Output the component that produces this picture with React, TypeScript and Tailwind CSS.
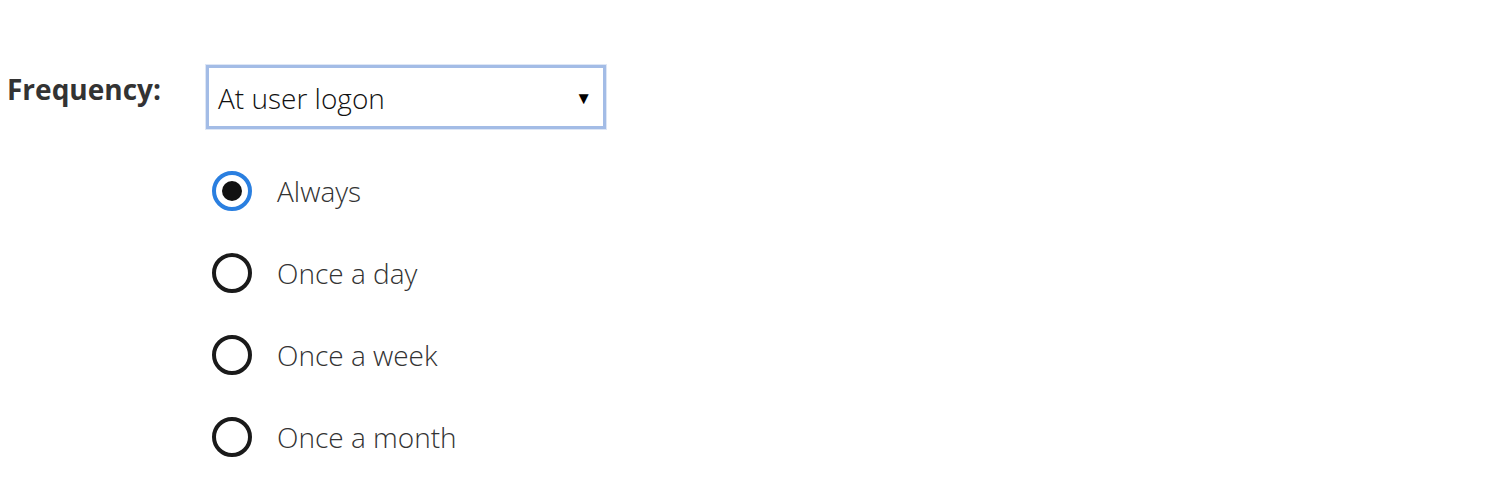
import { useState } from 'react';

const OPTIONS = ['Always', 'Once a day', 'Once a week', 'Once a month'];

function Radio({ checked }: { checked: boolean }) {
  if (checked) {
    return (
      <span className="w-[40px] h-[40px] rounded-full border-[4px] border-[#2a7fe0] bg-white flex items-center justify-center">
        <span className="w-[20px] h-[20px] rounded-full bg-[#111]" />
      </span>
    );
  }
  return <span className="w-[40px] h-[40px] rounded-full border-[4px] border-[#1a1a1a] bg-white" />;
}

export default function App() {
  const [value, setValue] = useState('Always');

  return (
    <div className="w-[1497px] h-[496px] bg-white text-[#333] pt-[65px] pl-[7px] font-['Open_Sans',sans-serif]">
      <div className="flex">
        <label className="w-[199px] pt-[6px] text-[28px] font-bold leading-[36px] text-[#333]">Frequency:</label>
        <div className="flex flex-col">
          <div className="w-[400px] h-[64px] border-[3px] border-[#a3bce6] shadow-[0_0_0_1px_#dde6f5] flex items-center justify-between pl-[9px] pr-[11px]">
            <span className="text-[28px] font-light text-[#111] leading-none pt-[2px]">At user logon</span>
            <span className="text-[17px] text-black leading-none">▼</span>
          </div>
          <div className="mt-[21px] flex flex-col">
            {OPTIONS.map((opt) => (
              <button
                key={opt}
                onClick={() => setValue(opt)}
                className="h-[82px] flex items-center gap-[25px] pl-[6px] text-left"
              >
                <Radio checked={value === opt} />
                <span className="text-[28px] font-light text-[#333] leading-none">{opt}</span>
              </button>
            ))}
          </div>
        </div>
      </div>
    </div>
  );
}
